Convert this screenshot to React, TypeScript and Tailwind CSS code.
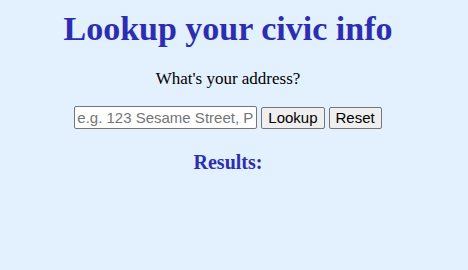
export default function App() {
  return (
    <div className="min-h-[270px] w-full bg-[#e3f0fd] font-['Liberation_Serif',serif]">
      <div className="flex w-[456px] flex-col items-center">
        <h1 className="mt-[9px] text-[34px] leading-[39px] font-bold text-[#2d2db4]">
          Lookup your civic info
        </h1>
        <p className="mt-[21px] text-[17px] leading-[20px] text-black">What's your address?</p>
        <div className="mt-[17px] flex items-center gap-[4px] font-['Liberation_Sans',sans-serif] text-[15px]">
          <input
            placeholder="e.g. 123 Sesame Street, Philadelphia, PA"
            className="h-[23px] w-[183px] rounded-[2px] border border-[#767676] bg-white px-[2px] text-[15px] placeholder:text-[#757575] outline-none"
          />
          <button className="h-[22px] rounded-[2px] border border-[#767676] bg-[#efefef] px-[6px] leading-[20px] text-black">
            Lookup
          </button>
          <button className="h-[22px] rounded-[2px] border border-[#767676] bg-[#efefef] px-[6px] leading-[20px] text-black">
            Reset
          </button>
        </div>
        <h3 className="mt-[22px] text-[20px] leading-[23px] font-bold text-[#2d2db4]">Results:</h3>
      </div>
    </div>
  )
}
